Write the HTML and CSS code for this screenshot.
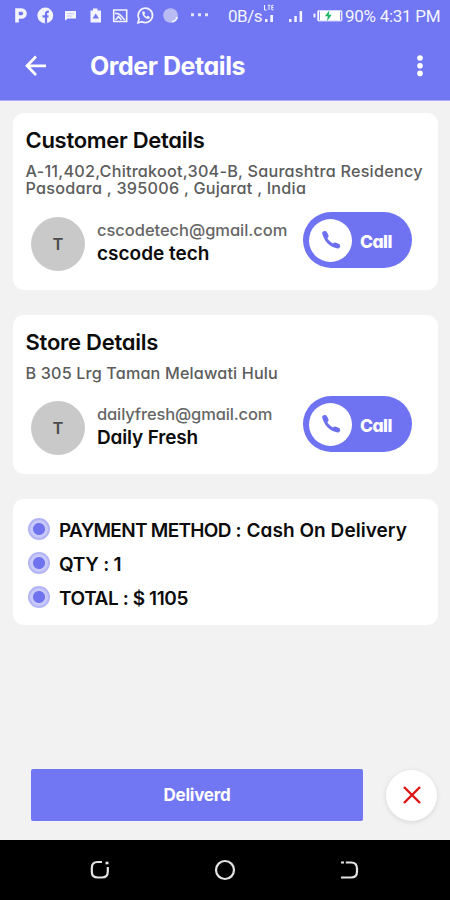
FILE: index.html
```
<!DOCTYPE html>
<html lang="en">
<head>
<meta charset="utf-8">
<title>Order Details</title>
<link rel="stylesheet" href="styles.css">
</head>
<body>
<div class="screen">
  <header class="header">
    <div class="status">
      <svg class="status-icons" width="228" height="32" viewBox="0 0 228 32" fill="none" stroke="#f4f4ff">
        <path d="M17 22.500V10H21.500a3.500 3.500 0 0 1 0 7h-3.500" stroke-width="3.600"/>
        <circle cx="45.300" cy="15.500" r="7.900" fill="#f4f4ff" stroke="none"/>
        <path d="M46 23.500v-9.700q0-2.300 2.900-2.100M42.500 16.300h6" stroke="#6f74f0" stroke-width="2.200"/>
        <path d="M65 11h11v7.500H68L65 20.500z" fill="#f4f4ff" stroke="none"/>
        <path d="M67 13.700h7M67 16h5" stroke="#b9bbf8" stroke-width=".8"/>
        <path d="M93 8.500h4.500v2H101v12H90.500v-12H93z" fill="#f4f4ff" stroke="none"/>
        <path d="M92.500 18.500l3.200-5 3.300 5z" fill="#7478ef" stroke="none"/>
        <path d="M113.700 10h13v11.500h-13z" stroke-width="1.600"/>
        <path d="M115 13.300q4 0 5.500 1.900t4.500 5M115.500 20l3-3.500 3 3.500" stroke-width="1.500"/>
        <path d="M138 22.800l1.100-3.900a7.200 7.200 0 1 1 2.900 2.800z" stroke-width="1.700"/>
        <path d="M142.300 11.500c-.7 4.200 3.800 8.300 7.200 7.100l.4-1.700-2.100-1.100-1.200 1c-1.200-.5-2-1.400-2.300-2.500l.9-.9-.9-2z" fill="#f4f4ff" stroke="none"/>
        <circle cx="170.500" cy="15.500" r="7.300" fill="#b9bbf4" stroke="none"/>
        <path d="M172 21.800q4.500-.8 5.200-5" stroke-width="1.700"/>
        <path d="M191 13.200h3v3h-3zM198 13.200h3v3h-3zM205 13.200h3v3h-3z" fill="#e4e5ff" stroke="none"/>
      </svg>
      <span class="net">0B/s</span>
      <svg class="signals" width="83" height="32" viewBox="262 0 83 32" fill="#f4f4ff">
        <path d="M265 19h2.500v3H265zM270.300 15h2.700v7h-2.700z"/>
        <path d="M264.500 5v5h2.200M267.800 5.300h2.500M269 5.300V10M273.500 5.300h-1.700v4.500h1.700M271.800 7.500h1.500" fill="none" stroke="#f4f4ff" stroke-width="1"/>
        <path d="M289 19h2.500v3H289zM294.300 16h2.500v6h-2.500zM299.600 11h2.500v11h-2.500z"/>
        <path d="M313.500 13.500h2v4h-2z"/>
        <rect x="317.500" y="10.500" width="24.500" height="10.500" rx="1" fill="#fff" stroke="#d0d2fa"/>
        <path d="M319.500 11.500v8.500M340.500 11.500v8.500" stroke="#8a8df2"/>
        <path d="M329.300 10.500l-4.500 5.700h3l-.8 5 4.800-6.500h-3z" fill="#20b568"/>
      </svg>
      <span class="time">90% 4:31 PM</span>
    </div>
    <div class="appbar">
      <svg width="22" height="22" viewBox="0 0 22 22" fill="none" stroke="#fff" stroke-width="2.700"><path d="M21 10.800H2.500M11 1.500L2 10.800l9 9.200"/></svg>
      <h1>Order Details</h1>
      <svg class="more" width="8" height="22" viewBox="0 0 8 22" fill="#fff"><circle cx="4" cy="3" r="2.800"/><circle cx="4" cy="10.700" r="2.800"/><circle cx="4" cy="18.400" r="2.800"/></svg>
    </div>
  </header>

  <main class="content">
    <section class="card">
      <h2>Customer Details</h2>
      <div class="address">
        <p class="addr-a">A-11,402,Chitrakoot,304-B, Saurashtra Residency</p>
        <p class="addr-b">Pasodara , 395006 , Gujarat , India</p>
      </div>
      <div class="contact">
        <div class="avatar">T</div>
        <div class="who">
          <div class="email">cscodetech@gmail.com</div>
          <div class="name">cscode tech</div>
        </div>
        <div class="call">
          <span class="knob"><svg width="20" height="20" viewBox="0 0 20 20" fill="none" stroke="#6c70ee" stroke-linecap="round"><path d="M3.700 3.300C3.300 9.500 10 16.300 16.600 16.200" stroke-width="3"/><path d="M3.700 3.500L5 6M14 15l2.600 1" stroke-width="5"/></svg></span>
          <span class="call-label">Call</span>
        </div>
      </div>
    </section>

    <section class="card">
      <h2 class="store">Store Details</h2>
      <p class="address">B 305 Lrg Taman Melawati Hulu</p>
      <div class="contact">
        <div class="avatar">T</div>
        <div class="who">
          <div class="email fresh">dailyfresh@gmail.com</div>
          <div class="name daily">Daily Fresh</div>
        </div>
        <div class="call">
          <span class="knob"><svg width="20" height="20" viewBox="0 0 20 20" fill="none" stroke="#6c70ee" stroke-linecap="round"><path d="M3.700 3.300C3.300 9.500 10 16.300 16.600 16.200" stroke-width="3"/><path d="M3.700 3.500L5 6M14 15l2.600 1" stroke-width="5"/></svg></span>
          <span class="call-label">Call</span>
        </div>
      </div>
    </section>

    <section class="card summary">
      <div class="line"><i class="dot"></i><span><span class="key">PAYMENT METHOD</span><span class="value"> : Cash On Delivery</span></span></div>
      <div class="line"><i class="dot"></i><span>QTY : 1</span></div>
      <div class="line"><i class="dot"></i><span class="total">TOTAL : $ 1105</span></div>
    </section>
  </main>

  <div class="actions">
    <div class="deliver">Deliverd</div>
    <div class="cancel"><svg width="18" height="18" viewBox="0 0 18 18" stroke="#dc1414" stroke-width="2.400"><path d="M1 1l16 16M17 1L1 17"/></svg></div>
  </div>

  <nav class="navbar">
    <svg width="22" height="22" viewBox="0 0 22 22" fill="none" stroke="#e4e4e4" stroke-width="2.200"><path d="M13 3H8.500Q2.800 3 2.800 9v3.500q0 6 6 6h4q6 0 6-6V8"/><path d="M16.500 4h3" stroke-width="2.600"/></svg>
    <svg width="22" height="22" viewBox="0 0 22 22" fill="none" stroke="#e4e4e4" stroke-width="2.200"><circle cx="11" cy="11" r="9"/></svg>
    <svg width="22" height="22" viewBox="0 0 22 22" fill="none" stroke="#e4e4e4" stroke-width="2.200"><path d="M3 3.500h3M7.800 3.500H13q6 0 6 6v3q0 6-6 6H3"/></svg>
  </nav>
</div>
</body>
</html>
```
FILE: styles.css
```
* { box-sizing: border-box; }
body {
  margin: 0;
  font-family: Inter, "Liberation Sans", sans-serif;
  font-feature-settings: "cv11";
  color: #0c0c0c;
}
h1, h2, p { margin: 0; }
svg { display: block; flex: none; }
.screen {
  width: 450px;
  height: 900px;
  display: flex;
  flex-direction: column;
  background: #f2f2f2;
  overflow: hidden;
  white-space: nowrap;
}

.header {
  height: 101px;
  flex: none;
  background: #7176f2;
  border-bottom: 1px solid #abaef5;
  color: #fff;
}
.status {
  display: flex;
  height: 32px;
  font: 17px/32px Roboto, sans-serif;
  color: #f4f4ff;
}
.net { width: 34px; letter-spacing: -.48px; }
.time { letter-spacing: -.28px; }
.appbar {
  display: flex;
  align-items: center;
  height: 67px;
  padding: 0 26px 0 25px;
}
.appbar h1 {
  margin-left: 43px;
  font-size: 25px;
  line-height: 32px;
  font-weight: 700;
  letter-spacing: -.44px;
}
.more { margin-left: auto; }

.content {
  flex: 1;
  display: flex;
  flex-direction: column;
  gap: 25px;
  padding: 12px 12px 0 13px;
}
.card {
  background: #fff;
  border-radius: 11px;
  padding: 13.500px 26px 22px 12.500px;
}
h2 {
  font-size: 22px;
  line-height: 26px;
  font-weight: 600;
  letter-spacing: -.29px;
}
.store { letter-spacing: -.24px; }
.address {
  margin: 10px 0 14.500px;
  font-size: 16.200px;
  line-height: 17.5px;
  font-weight: 500;
  color: #5c5c5c;
  letter-spacing: .15px;
}
.addr-a { letter-spacing: .23px; }
.addr-b { letter-spacing: .25px; }
p.address { margin: 10px 0 14px; }
.contact { display: flex; align-items: flex-start; height: 56px; }
.avatar {
  width: 54px;
  height: 54px;
  margin: 5px 12px 0 5.500px;
  border-radius: 50%;
  background: #c9c9c9;
  color: #4c4c4c;
  text-align: center;
  font-size: 16.5px;
  line-height: 54px;
  font-weight: 600;
}
.who { margin-top: 8px; }
.email {
  font-size: 16.5px;
  line-height: 20px;
  font-weight: 500;
  letter-spacing: -.04px;
  color: #666;
}
.email.fresh { letter-spacing: -.14px; }
.name {
  margin-top: 2px;
  font-size: 19px;
  line-height: 24px;
  font-weight: 600;
}
.daily { letter-spacing: -.165px; }
.call {
  display: flex;
  align-items: center;
  width: 109px;
  height: 56px;
  margin-left: auto;
  padding-left: 6px;
  border-radius: 28px;
  background: #6f73f1;
  color: #fff;
}
.knob {
  display: flex;
  align-items: center;
  justify-content: center;
  width: 43px;
  height: 43px;
  border-radius: 50%;
  background: #fff;
}
.call-label {
  margin: 3px 0 0 8px;
  font-size: 17.5px;
  font-weight: 800;
  letter-spacing: -.55px;
}

.summary {
  padding: 14px 15px 10.400px;
}
.line {
  display: flex;
  align-items: center;
  height: 33.850px;
  font-size: 19px;
  font-weight: 600;
  letter-spacing: -.27px;
}
.line > span { padding-top: 2px; }
.dot {
  width: 22px;
  height: 22px;
  margin: -2px 9px 0 0;
  border-radius: 50%;
  border: 2px solid #b3b4f6;
  background: radial-gradient(circle, #6f73ee 5.500px, #c9caf9 6.500px);
}
.key { letter-spacing: -.7px; }
.value { letter-spacing: .05px; }
.total { letter-spacing: -.41px; }

.actions {
  display: flex;
  align-items: center;
  gap: 23px;
  height: 52px;
  margin: 0 13px 19px 31px;
}
.deliver {
  width: 332px;
  height: 52px;
  border-radius: 2px;
  background: #7176f2;
  color: #fff;
  text-align: center;
  font-size: 17px;
  line-height: 53px;
  font-weight: 700;
  letter-spacing: -.23px;
}
.cancel {
  display: flex;
  align-items: center;
  justify-content: center;
  width: 51px;
  height: 51px;
  border-radius: 50%;
  background: #fff;
  box-shadow: 0 1px 5px rgba(0, 0, 0, .12);
}
.navbar {
  display: flex;
  align-items: center;
  justify-content: space-between;
  flex: none;
  height: 60px;
  padding: 0 90px 0 89px;
  background: #000;
}
```
